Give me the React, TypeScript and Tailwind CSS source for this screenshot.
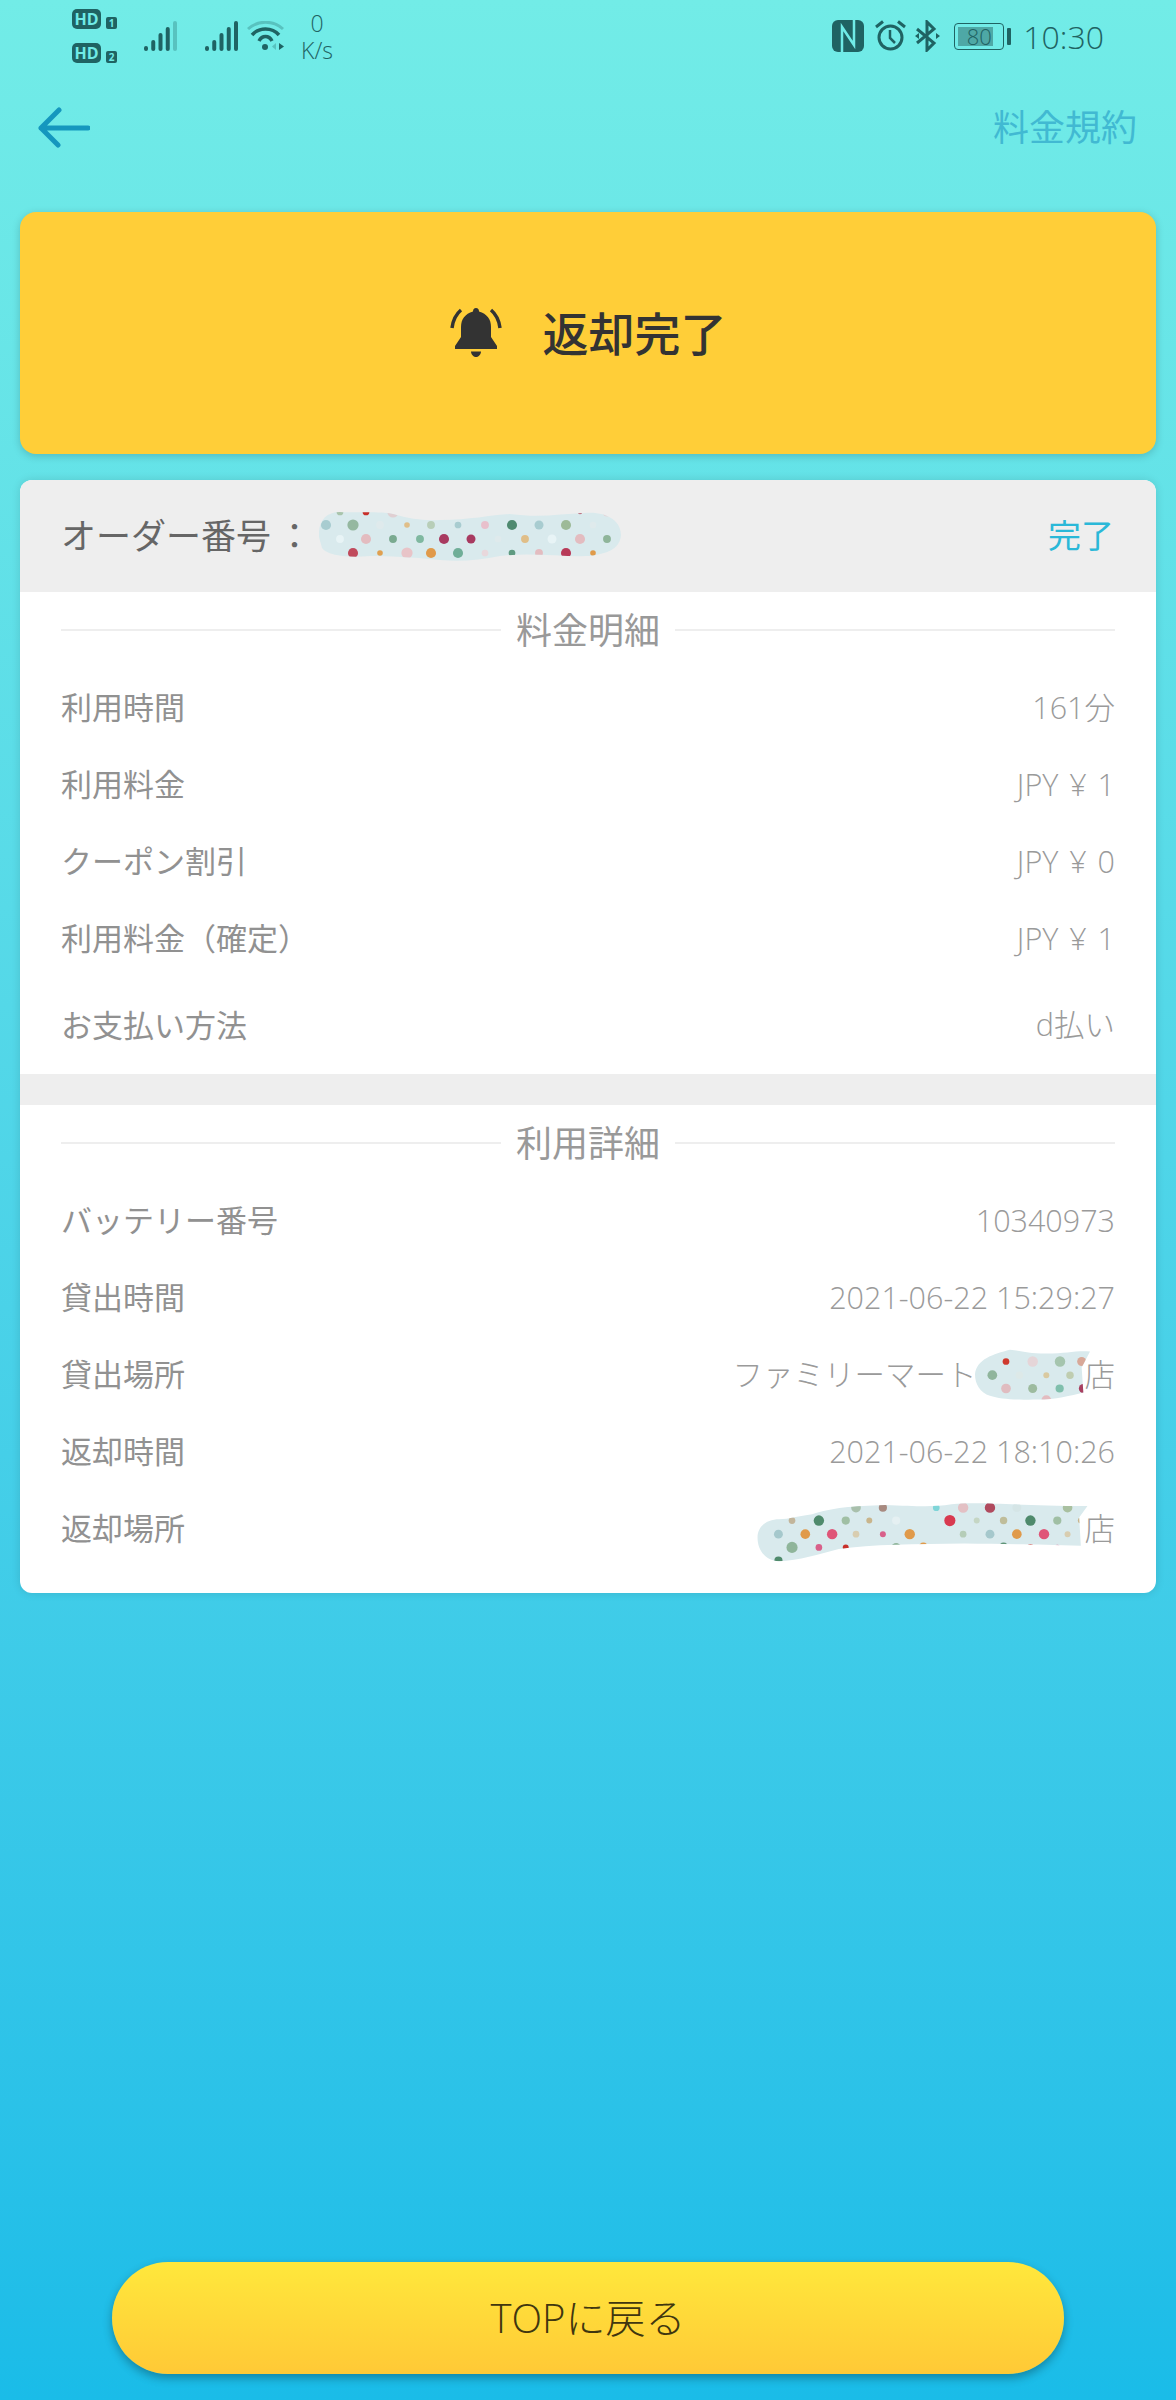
import React from 'react';

type Dot = [number, number, number, string];

interface ScribbleProps {
    id: string;
    viewBox: string;
    width: number;
    height: number;
    blob: string;
    dots: Dot[];
    className?: string;
}

// painted-over parts of the screenshot: a pale brush stroke with a dotted pattern
const Scribble: React.FC<ScribbleProps> = ({ id, viewBox, width, height, blob, dots, className }) => (
    <svg width={width} height={height} viewBox={viewBox} className={className}>
        <clipPath id={id}>
            <path d={blob} />
        </clipPath>
        <path d={blob} fill="#d9eaed" />
        <g clipPath={`url(#${id})`}>
            {dots.map(([cx, cy, r, fill]) => (
                <circle key={`${cx}-${cy}`} cx={cx} cy={cy} r={r * 1.12} fill={fill} />
            ))}
        </g>
    </svg>
);

const ORDER_BLOB = 'M319 537 C318 522 325 512 340 512 C355 513 380 511 393 514 C410 519 425 521 440 520 C470 520 490 515 510 514 C540 518 560 514 585 513 C605 511 621 520 621 535 C620 548 610 553 590 556 C560 557 530 552 500 556 C480 560 460 562 440 560 C410 557 390 556 370 556 C350 558 328 556 322 548 Z';
const ORDER_DOTS: Dot[] = [
    [340, 512, 3, '#a9c4ac'], [366, 512, 3, '#c8302a'], [393, 512, 5, '#e0cfd2'], [420, 512, 3, '#5f9478'], [498, 512, 2, '#d8a080'], [580, 512, 2, '#b04a5e'], [607, 512, 4, '#e3d5d8'],
    [326, 525, 4.5, '#a8ccd0'], [353, 525, 5, '#95b8a0'], [380, 525, 3.5, '#dfeaec'], [407, 525, 2.5, '#e0be88'], [431, 525, 3.5, '#b8ceb8'], [458, 525, 3, '#a8ccd0'], [485, 525, 3.5, '#e8c0cc'], [512, 525, 4.5, '#4f8a70'], [539, 525, 4, '#a8ccd0'], [566, 525, 4.5, '#9dba98'], [593, 525, 3, '#dfeaec'],
    [340, 539, 3.5, '#e8f4f6'], [366, 539, 4.5, '#e3bcc0'], [393, 539, 3.5, '#7aaa90'], [420, 539, 3.5, '#7fb8a0'], [444, 539, 4.5, '#a83a60'], [471, 539, 4, '#a83a60'], [498, 539, 3, '#dfeaec'], [525, 539, 3.5, '#e0be88'], [552, 539, 4, '#e8f4f6'], [580, 539, 4.5, '#e3bcc0'], [607, 539, 3.5, '#8fb59a'],
    [353, 553, 4.5, '#c04a5c'], [380, 553, 2.5, '#e0a050'], [407, 553, 5, '#e8c4c8'], [431, 553, 4.5, '#e09a4a'], [458, 553, 4.5, '#6fae98'], [485, 553, 3, '#e8d8dc'], [512, 553, 3, '#5f9a80'], [539, 553, 3.5, '#e3bcc0'], [566, 553, 4.5, '#b83a58'], [593, 553, 2.5, '#e09a4a'],
];

const RENT_BLOB = 'M825 170 C830 125 880 110 930 97 C970 100 980 108 1040 108 C1100 108 1130 98 1170 102 L1145 150 L1150 225 C1110 235 1060 248 1000 246 C950 248 900 245 870 235 C840 225 825 200 825 170 Z';
const RENT_DOTS: Dot[] = [
    [918, 132, 9, '#cf3a2e'], [998, 132, 14, '#e5d5d8'], [1080, 132, 14, '#a5c5ae'], [1145, 132, 12, '#d8a898'],
    [877, 173, 13, '#90b59c'], [958, 173, 10, '#dde9e8'], [1039, 173, 8, '#d9c9a0'], [1110, 173, 10, '#bfcdb0'],
    [918, 213, 13, '#e0bcc0'], [998, 213, 12, '#9dbb9f'], [1079, 213, 11, '#7fbfac'], [1150, 213, 12, '#a84060'],
    [1039, 248, 13, '#e3bcc0'],
];

const RETURN_BLOB = 'M175 660 C175 625 205 605 240 605 C270 605 300 595 340 590 C400 570 460 565 560 562 C650 565 700 570 760 560 C850 550 950 565 1170 565 L1145 600 L1150 685 C1000 680 900 680 800 678 C650 680 520 680 420 695 C360 710 300 730 240 732 C200 730 175 700 175 660 Z';
const RETURN_DOTS: Dot[] = [
    [472, 570, 13, '#a9c0ac'], [553, 570, 11, '#a88a80'], [714, 570, 9, '#7fd5d8'], [795, 570, 14, '#e3c0c4'], [876, 570, 14, '#b04a5e'], [957, 570, 12, '#d5e5e6'], [1110, 570, 13, '#a9c0a0'],
    [279, 609, 9, '#c2b59b'], [360, 609, 14, '#4f8a6c'], [441, 609, 11, '#a0bfa4'], [512, 609, 8, '#c9b58c'], [593, 609, 11, '#e5f0f2'], [755, 609, 15, '#d83a50'], [836, 609, 8, '#c5d6c4'], [917, 609, 10, '#bfbd9a'], [998, 609, 14, '#4f8a6c'], [1079, 609, 11, '#a0bfa4'], [1150, 609, 8, '#c9b58c'],
    [238, 650, 12, '#a5c8cc'], [319, 650, 13, '#e09a4a'], [400, 650, 14, '#df5578'], [472, 650, 9, '#d8cdb0'], [553, 650, 8, '#d8608a'], [634, 650, 14, '#e09a4a'], [795, 650, 9, '#b5cdb8'], [876, 650, 12, '#a5c8cc'], [957, 650, 13, '#e09a4a'], [1039, 650, 14, '#df5578'], [1110, 650, 8, '#d8cdb0'],
    [279, 690, 15, '#8fb59a'], [360, 690, 9, '#d8608a'], [441, 690, 8, '#c8302a'], [593, 690, 12, '#8fb59a'], [675, 690, 13, '#e09a4a'], [917, 690, 13, '#5f9478'], [998, 690, 9, '#c8302a'], [1079, 690, 7, '#d8608a'],
    [238, 730, 11, '#4f8a6c'],
];

const SIGNAL_HEIGHTS = [5, 11, 18, 24, 30];

const Signal: React.FC<{ weakLast?: boolean }> = ({ weakLast }) => (
    <svg width="33" height="30" viewBox="0 0 33 30">
        {SIGNAL_HEIGHTS.map((h, i) => (
            <rect key={h} x={i * 7.25} y={30 - h} width="4" height={h} rx="2" fill="#1f6363" opacity={weakLast && i === 4 ? 0.3 : 1} />
        ))}
    </svg>
);

const SimBadge: React.FC<{ n: number }> = ({ n }) => (
    <div className="flex items-end gap-[5px]">
        <span className="w-[29px] h-[20px] rounded-[5px] bg-[#1f6363] text-[#70ebe7] text-[16px] leading-[20px] font-bold text-center">HD</span>
        <span className="w-[11px] h-[12px] rounded-[2px] bg-[#1f6363] text-[#70ebe7] text-[10px] leading-[12px] font-bold text-center">{n}</span>
    </div>
);

const StatusBar: React.FC = () => (
    <div className="h-[76px] flex justify-between text-[#1f6363] shrink-0">
        <div className="flex items-start pl-[72px]">
            <div className="flex flex-col gap-[14px] pt-[9px]">
                <SimBadge n={1} />
                <SimBadge n={2} />
            </div>
            <div className="ml-[27px] mt-[21px]"><Signal weakLast /></div>
            <div className="ml-[28px] mt-[21px]"><Signal /></div>
            <svg className="ml-[9px] mt-[21px]" width="37" height="30" viewBox="0 0 37 30" fill="none">
                <path d="M1 8 C11 -1 26 -1 36 8" stroke="#1f6363" strokeOpacity="0.3" strokeWidth="3" />
                <path d="M5 14 C12 6 25 6 32 14" stroke="#1f6363" strokeWidth="3.5" />
                <path d="M12 20 C15 14 22 14 25 20" stroke="#1f6363" strokeWidth="3.5" />
                <circle cx="18" cy="26" r="3" fill="#1f6363" />
                <path d="M29 22 V29 L25 25.5 Z" fill="#1f6363" fillOpacity="0.3" />
                <path d="M32 22 V29 L37 25.5 Z" fill="#1f6363" />
            </svg>
            <div className="ml-[16px] mt-[10px] w-[34px] flex flex-col items-center text-[23px] leading-[27px] font-light">
                <span>0</span>
                <span>K/s</span>
            </div>
        </div>
        <div className="flex items-start pr-[72px]">
            <svg className="mt-[20px]" width="32" height="32" viewBox="0 0 32 32">
                <rect width="32" height="32" rx="6" fill="#1f6363" />
                <path d="M10 32 V7 L22 25 V0" fill="none" stroke="#70ebe7" strokeWidth="2.5" />
            </svg>
            <svg className="ml-[11px] mt-[20px]" width="31" height="31" viewBox="0 0 31 31" fill="none" stroke="#1f6363">
                <circle cx="15.5" cy="17.5" r="11.5" strokeWidth="3" />
                <path d="M15 10 V18 L20 23" strokeWidth="2.5" />
                <path d="M1 7 L8 1.5 M30 7 L23 1.5" strokeWidth="3" />
            </svg>
            <svg className="ml-[9px] mt-[20px]" width="25" height="32" viewBox="0 0 25 32" fill="none" stroke="#1f6363" strokeWidth="3">
                <path d="M2 9 L19 23 L12 30 V2 L19 9 L2 23" />
                <path d="M0 16 L4 13 V19 Z M25 16 L21 13 V19 Z" fill="#1f6363" stroke="none" />
            </svg>
            <div className="ml-[14px] mt-[23px] flex items-center gap-[3px]">
                <div className="relative w-[50px] h-[27px] rounded-[4px] border border-[#1f6363]">
                    <div className="absolute left-[3px] top-[3px] w-[35px] h-[19px] bg-[#4ea8a6]" />
                    <span className="absolute inset-0 text-center text-[22px] leading-[25px] font-light">80</span>
                </div>
                <div className="w-[4px] h-[17px] rounded-[1px] bg-[#1f6363]" />
            </div>
            <span className="ml-[12px] mt-[17px] text-[32px] leading-[40px] font-light">10:30</span>
        </div>
    </div>
);

const Row: React.FC<{ label: string; value?: string; tall?: boolean; money?: boolean; children?: React.ReactNode }> = ({ label, value, tall, money, children }) => (
    <div className={`flex justify-between items-center pb-[2px] ${tall ? 'h-[96px]' : 'h-[77px]'}`}>
        <span className="text-[31px] text-[#919191]">{label}</span>
        {children ?? <span className={`text-[30.5px] font-light text-[#9a9a9a] ${money ? '[word-spacing:3px]' : ''}`}>{value}</span>}
    </div>
);

const SectionTitle: React.FC<{ title: string }> = ({ title }) => (
    <div className="h-[78px] flex items-center gap-[15px]">
        <div className="flex-1 h-[2px] mb-[2px] bg-[#eeeeee]" />
        <span className="text-[36px] text-[#999999]">{title}</span>
        <div className="flex-1 h-[2px] mb-[2px] bg-[#eeeeee]" />
    </div>
);

const App: React.FC = () => {
    return (
        <div className="w-[1176px] h-[2400px] flex flex-col bg-gradient-to-b from-[#72ece7] to-[#1abce8] font-['Open_Sans','Noto_Sans_CJK_JP',sans-serif]">
            <StatusBar />

            <div className="h-[136px] shrink-0 flex justify-between items-start px-[38px] pt-[30px]">
                <svg width="52" height="44" viewBox="0 0 52 44" fill="none" stroke="#1597be" strokeWidth="5" strokeLinecap="round" strokeLinejoin="round">
                    <path d="M50 22 H3 M21 4 L3 22 L20 39" />
                </svg>
                <span className="text-[36px] leading-[44px] text-[#41b9d2] mr-[1px]">料金規約</span>
            </div>

            <div className="mx-[20px] h-[242px] shrink-0 rounded-[16px] bg-[#ffce38] shadow-[0_2px_8px_rgba(0,0,0,0.18)] flex items-center justify-center gap-[41px]">
                <svg width="52" height="50" viewBox="0 0 52 50">
                    <path d="M26 0 C24 0 23 1.5 23 3.5 C15 6 11 11 11 19 V29 L5 38 V41 H47 V38 L41 29 V19 C41 11 37 6 29 3.5 C29 1.5 28 0 26 0 Z" fill="#333333" />
                    <path d="M21 43.5 H31 C31 47 28 49 26 49 C24 49 21 47 21 43.5 Z" fill="#333333" />
                    <path d="M2 20 C3 12 5 7 11 2 M50 20 C49 12 47 7 41 2" fill="none" stroke="#333333" strokeWidth="3.5" />
                </svg>
                <span className="text-[46px] font-medium text-[#333333]">返却完了</span>
            </div>

            <div className="mx-[20px] mt-[26px] rounded-[12px] bg-white overflow-hidden shadow-[0_0_10px_rgba(0,0,0,0.12)] shrink-0">
                <div className="h-[112px] bg-[#eeeeee] flex items-center justify-between pl-[41px] pr-[42px]">
                    <div className="flex items-center">
                        <span className="text-[35px] text-[#666666]">オーダー番号</span>
                        <span className="ml-[6px] text-[35px] text-[#666666]">：</span>
                        <Scribble id="order" viewBox="319 512 302 50" width={302} height={50} blob={ORDER_BLOB} dots={ORDER_DOTS} className="ml-[7px] mt-[2px]" />
                    </div>
                    <span className="text-[33px] text-[#2ab8d8]">完了</span>
                </div>

                <div className="px-[41px]">
                    <SectionTitle title="料金明細" />
                    <Row label="利用時間" value="161分" />
                    <Row label="利用料金" value="JPY ¥ 1" money />
                    <Row label="クーポン割引" value="JPY ¥ 0" money />
                    <Row label="利用料金（確定）" value="JPY ¥ 1" money />
                    <Row label="お支払い方法" value="d払い" tall />
                </div>

                <div className="h-[31px] bg-[#eeeeee]" />

                <div className="px-[41px] pb-[25px]">
                    <SectionTitle title="利用詳細" />
                    <Row label="バッテリー番号" value="10340973" />
                    <Row label="貸出時間" value="2021-06-22 15:29:27" />
                    <Row label="貸出場所">
                        <div className="flex items-center text-[30.5px] font-light text-[#9a9a9a]">
                            <span>ファミリーマート</span>
                            <Scribble id="rent" viewBox="825 95 345 155" width={115} height={52} blob={RENT_BLOB} dots={RENT_DOTS} className="-ml-[2px] -mr-[5px]" />
                            <span>店</span>
                        </div>
                    </Row>
                    <Row label="返却時間" value="2021-06-22 18:10:26" />
                    <Row label="返却場所">
                        <div className="flex items-center text-[30.5px] font-light text-[#9a9a9a]">
                            <Scribble id="return" viewBox="170 550 1005 190" width={335} height={63} blob={RETURN_BLOB} dots={RETURN_DOTS} className="-mr-[5px] mt-[8px]" />
                            <span>店</span>
                        </div>
                    </Row>
                </div>
            </div>

            <div className="mt-auto mb-[26px] mx-[112px] h-[112px] shrink-0 rounded-full bg-gradient-to-b from-[#ffe83c] to-[#ffc936] shadow-[0_4px_10px_rgba(0,0,0,0.3)] flex items-center justify-center text-[40px] font-light text-[#40360f]">
                TOPに戻る
            </div>
        </div>
    );
};

export default App;
